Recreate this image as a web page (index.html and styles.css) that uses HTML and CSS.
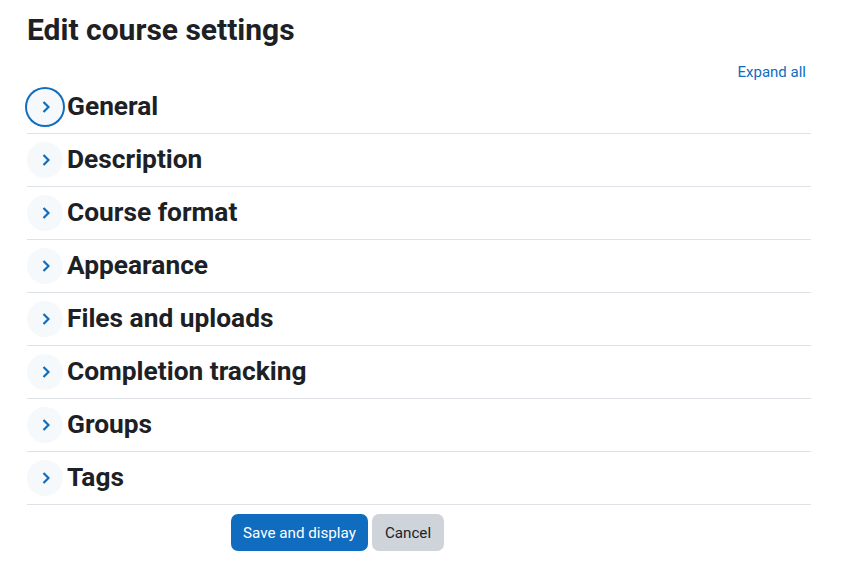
FILE: index.html
```html
<!DOCTYPE html>
<html>
<head>
<meta charset="utf-8">
<link rel="stylesheet" href="styles.css">
</head>
<body>
<div class="page">
  <h2 class="title">Edit course settings</h2>
  <div class="expand-row"><a class="expand-all" href="#">Expand all</a></div>
  <div class="sections">
    <div class="section"><span class="toggle focused"><svg viewBox="0 0 8 12" width="8" height="12"><path d="M1.5 1 L6.5 6 L1.5 11" fill="none" stroke="#0f6cbf" stroke-width="2.2"/></svg></span><h3>General</h3></div>
    <div class="section"><span class="toggle"><svg viewBox="0 0 8 12" width="8" height="12"><path d="M1.5 1 L6.5 6 L1.5 11" fill="none" stroke="#0f6cbf" stroke-width="2.2"/></svg></span><h3>Description</h3></div>
    <div class="section"><span class="toggle"><svg viewBox="0 0 8 12" width="8" height="12"><path d="M1.5 1 L6.5 6 L1.5 11" fill="none" stroke="#0f6cbf" stroke-width="2.2"/></svg></span><h3>Course format</h3></div>
    <div class="section"><span class="toggle"><svg viewBox="0 0 8 12" width="8" height="12"><path d="M1.5 1 L6.5 6 L1.5 11" fill="none" stroke="#0f6cbf" stroke-width="2.2"/></svg></span><h3>Appearance</h3></div>
    <div class="section"><span class="toggle"><svg viewBox="0 0 8 12" width="8" height="12"><path d="M1.5 1 L6.5 6 L1.5 11" fill="none" stroke="#0f6cbf" stroke-width="2.2"/></svg></span><h3>Files and uploads</h3></div>
    <div class="section"><span class="toggle"><svg viewBox="0 0 8 12" width="8" height="12"><path d="M1.5 1 L6.5 6 L1.5 11" fill="none" stroke="#0f6cbf" stroke-width="2.2"/></svg></span><h3>Completion tracking</h3></div>
    <div class="section"><span class="toggle"><svg viewBox="0 0 8 12" width="8" height="12"><path d="M1.5 1 L6.5 6 L1.5 11" fill="none" stroke="#0f6cbf" stroke-width="2.2"/></svg></span><h3>Groups</h3></div>
    <div class="section"><span class="toggle"><svg viewBox="0 0 8 12" width="8" height="12"><path d="M1.5 1 L6.5 6 L1.5 11" fill="none" stroke="#0f6cbf" stroke-width="2.2"/></svg></span><h3>Tags</h3></div>
  </div>
  <div class="buttons">
    <button class="btn primary">Save and display</button>
    <button class="btn secondary">Cancel</button>
  </div>
</div>
</body>
</html>
```
FILE: styles.css
```css
html, body {
  margin: 0;
  padding: 0;
  background: #fff;
}
body {
  font-family: Roboto, "Liberation Sans", sans-serif;
  color: #1d2125;
}
.page {
  width: 784px;
  padding: 14px 0 0 27px;
}
.title {
  margin: 0;
  font-size: 30px;
  font-weight: 700;
  line-height: 32px;
}
.expand-row {
  display: flex;
  justify-content: flex-end;
  padding-right: 5px;
  margin-top: 17px;
  height: 18px;
}
.expand-all {
  color: #0f6cbf;
  text-decoration: none;
  font-size: 15px;
  line-height: 18px;
}
.section {
  display: flex;
  align-items: center;
  height: 52px;
  border-bottom: 1px solid #dee2e6;
}
.toggle {
  width: 36px;
  height: 36px;
  border-radius: 50%;
  background: #f5f9fc;
  display: flex;
  align-items: center;
  justify-content: center;
  margin-right: 4px;
  box-sizing: border-box;
}
.toggle svg {
  display: block;
  margin-left: 1px;
}
.toggle.focused {
  box-shadow: 0 0 0 2px #0f6cbf;
  background: #f5f9fc;
}
.section h3 {
  margin: 0;
  padding-bottom: 2px;
  font-size: 26.3px;
  font-weight: 700;
  line-height: 30px;
}
.buttons {
  display: flex;
  gap: 4px;
  padding-left: 204px;
  margin-top: 9px;
}
.btn {
  font-family: Roboto, "Liberation Sans", sans-serif;
  font-size: 15.2px;
  height: 37px;
  padding: 0 12px;
  border: none;
  border-radius: 7px;
}
.primary {
  background: #0f6cbf;
  color: #fff;
}
.secondary {
  background: #ced4da;
  color: #1d2125;
  padding: 0 13px;
}
```
